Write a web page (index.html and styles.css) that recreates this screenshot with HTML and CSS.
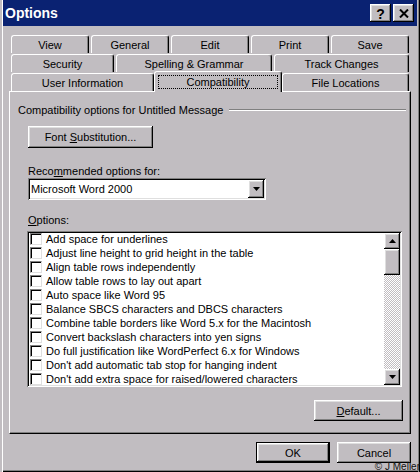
FILE: index.html
```html
<!DOCTYPE html>
<html>
<head>
<meta charset="utf-8">
<title>Options</title>
<link rel="stylesheet" href="styles.css">
</head>
<body>
<div class="window">
  <div class="titlebar">
    <span class="title">Options</span>
    <div class="caption-buttons">
      <div class="cap-btn help">?</div>
      <div class="cap-btn close">
        <svg width="10" height="9" viewBox="0 0 10 9"><path d="M1 0.5 L9 8.5 M9 0.5 L1 8.5" stroke="#000" stroke-width="2"/></svg>
      </div>
    </div>
  </div>
  <div class="body">
    <div class="tabs">
      <div class="tab-row row1">
        <div class="tab">View</div>
        <div class="tab">General</div>
        <div class="tab">Edit</div>
        <div class="tab">Print</div>
        <div class="tab">Save</div>
      </div>
      <div class="tab-row row2">
        <div class="tab">Security</div>
        <div class="tab">Spelling &amp; Grammar</div>
        <div class="tab">Track Changes</div>
      </div>
      <div class="tab-row row3">
        <div class="tab">User Information</div>
        <div class="tab active"><span class="focus">Compatibility</span></div>
        <div class="tab">File Locations</div>
      </div>
    </div>
    <div class="panel">
      <div class="group-head"><span>Compatibility options for Untitled Message</span><span class="etch"></span></div>
      <div class="group-body">
        <div class="btn font-sub"><span>Font <u>S</u>ubstitution...</span></div>
        <div class="label rec">Reco<u>m</u>mended options for:</div>
        <div class="combo">
          <span class="combo-text">Microsoft Word 2000</span>
          <span class="btn combo-btn"><svg width="7" height="4" viewBox="0 0 7 4"><polygon points="0,0 7,0 3.5,4" fill="#000"/></svg></span>
        </div>
        <div class="label opts"><u>O</u>ptions:</div>
        <div class="listbox">
          <ul class="items">
            <li class="item"><span class="cb"></span><span>Add space for underlines</span></li>
            <li class="item"><span class="cb"></span><span>Adjust line height to grid height in the table</span></li>
            <li class="item"><span class="cb"></span><span>Align table rows independently</span></li>
            <li class="item"><span class="cb"></span><span>Allow table rows to lay out apart</span></li>
            <li class="item"><span class="cb"></span><span>Auto space like Word 95</span></li>
            <li class="item"><span class="cb"></span><span>Balance SBCS characters and DBCS characters</span></li>
            <li class="item"><span class="cb"></span><span>Combine table borders like Word 5.x for the Macintosh</span></li>
            <li class="item"><span class="cb"></span><span>Convert backslash characters into yen signs</span></li>
            <li class="item"><span class="cb"></span><span>Do full justification like WordPerfect 6.x for Windows</span></li>
            <li class="item"><span class="cb"></span><span>Don't add automatic tab stop for hanging indent</span></li>
            <li class="item"><span class="cb"></span><span>Don't add extra space for raised/lowered characters</span></li>
          </ul>
          <div class="scrollbar">
            <div class="btn sb-btn"><svg width="7" height="4" viewBox="0 0 7 4"><polygon points="3.5,0 7,4 0,4" fill="#000"/></svg></div>
            <div class="btn sb-thumb"></div>
            <div class="sb-track"></div>
            <div class="btn sb-btn"><svg width="7" height="4" viewBox="0 0 7 4"><polygon points="0,0 7,0 3.5,4" fill="#000"/></svg></div>
          </div>
        </div>
        <div class="default-row"><div class="btn default-btn"><span><u>D</u>efault...</span></div></div>
      </div>
    </div>
    <div class="dialog-buttons">
      <div class="btn dlg-btn ok">OK</div>
      <div class="btn dlg-btn">Cancel</div>
    </div>
  </div>
  <div class="watermark">© J Meller</div>
</div>
</body>
</html>
```

FILE: styles.css
```css
* { box-sizing: border-box; }

body {
  margin: 0;
  background: #c1bdc1;
  font-family: "Liberation Sans", Arial, sans-serif;
  font-size: 11px;
  color: #000;
}

.window {
  position: relative;
  width: 420px;
  height: 472px;
  overflow: hidden;
  background: #c1bdc1;
  padding: 0 3px;
  box-shadow:
    inset 2px 0 #c1bdc1,
    inset 3px 0 #fff,
    inset -1px 0 #000,
    inset -2px 0 #808080,
    inset 0 -1px #000,
    inset 0 -2px #808080;
}

.titlebar {
  height: 26px;
  background: #0a2272;
  display: flex;
  align-items: center;
  justify-content: space-between;
  padding: 0 3px 0 2px;
}

.title {
  color: #fff;
  font-weight: bold;
  font-size: 14px;
}

.caption-buttons {
  display: flex;
  gap: 2px;
}

.cap-btn {
  width: 21px;
  height: 18px;
  background: #c1bdc1;
  display: flex;
  align-items: center;
  justify-content: center;
  box-shadow:
    inset -1px -1px #000,
    inset 1px 1px #fff,
    inset -2px -2px #808080,
    inset 2px 2px #dfdfdf;
}

.help {
  font-weight: bold;
  font-size: 14px;
  line-height: 1;
  padding-top: 1px;
}

.body {
  padding: 9px 6px 0;
}

.tabs {
  display: flex;
  flex-direction: column;
  gap: 1px;
  padding: 0 2px;
}

.tab-row {
  display: grid;
  gap: 2px;
  height: 18px;
}

.row1 { grid-template-columns: repeat(5, 1fr); }
.row2 { grid-template-columns: 103px 156px 1fr; }
.row3 { grid-template-columns: 143px 124px 1fr; }

.tab {
  background: #c1bdc1;
  border-top: 1px solid #fff;
  border-left: 1px solid #fff;
  border-right: 1px solid #000;
  border-radius: 3px 3px 0 0;
  box-shadow: inset -1px 0 #808080;
  display: flex;
  align-items: center;
  justify-content: center;
  white-space: nowrap;
}

.tab.active {
  position: relative;
  z-index: 1;
  margin: -2px -2px -1px;
  padding: 3px;
  align-items: stretch;
}

.focus {
  flex: 1;
  border: 1px dotted #000;
  display: flex;
  align-items: center;
  justify-content: center;
}

.panel {
  height: 343px;
  border-top: 1px solid #fff;
  border-left: 1px solid #fff;
  border-right: 1px solid #000;
  border-bottom: 1px solid #000;
  box-shadow: inset -1px -1px #808080;
  padding: 11px 7px 0 8px;
}

.group-head {
  display: flex;
  align-items: center;
  height: 14px;
  margin-right: -3px;
  white-space: nowrap;
}

.etch {
  flex: 1;
  height: 2px;
  margin-left: 6px;
  border-top: 1px solid #808080;
  border-bottom: 1px solid #fff;
}

.group-body {
  padding-left: 10px;
}

.btn {
  background: #c1bdc1;
  display: flex;
  align-items: center;
  justify-content: center;
  white-space: nowrap;
  box-shadow:
    inset -1px -1px #000,
    inset 1px 1px #fff,
    inset -2px -2px #808080,
    inset 2px 2px #dfdfdf;
}

.font-sub {
  margin-top: 9px;
  width: 125px;
  height: 22px;
}

.label {
  line-height: 14px;
  height: 14px;
}

.rec { margin-top: 16px; }

.combo {
  width: 238px;
  height: 22px;
  background: #fff;
  padding: 2px;
  display: flex;
  align-items: stretch;
  box-shadow:
    inset 1px 1px #808080,
    inset -1px -1px #fff,
    inset 2px 2px #000,
    inset -2px -2px #dfdfdf;
}

.combo-text {
  flex: 1;
  padding-left: 1px;
  display: flex;
  align-items: center;
}

.combo-btn {
  width: 16px;
}

.opts { margin-top: 13px; }

.listbox {
  margin-top: 4px;
  margin-left: -1px;
  width: 375px;
  height: 156px;
  background: #fff;
  padding: 2px;
  display: flex;
  overflow: hidden;
  box-shadow:
    inset 1px 1px #808080,
    inset -1px -1px #fff,
    inset 2px 2px #000,
    inset -2px -2px #dfdfdf;
}

.items {
  flex: 1;
  list-style: none;
  margin: -1px 0 0;
  padding: 0;
  overflow: hidden;
}

.item {
  height: 14px;
  display: flex;
  align-items: center;
  gap: 4px;
  padding-left: 1px;
  white-space: nowrap;
}

.cb {
  width: 12px;
  height: 12px;
  flex: none;
  border-top: 1px solid #808080;
  border-left: 1px solid #808080;
  border-right: 1px solid #dfdfdf;
  border-bottom: 1px solid #dfdfdf;
  box-shadow: inset 1px 1px #000;
}

.scrollbar {
  width: 16px;
  display: flex;
  flex-direction: column;
}

.sb-btn {
  height: 16px;
  flex: none;
}

.sb-thumb {
  height: 26px;
  flex: none;
}

.sb-track {
  flex: 1;
  background: repeating-conic-gradient(#fff 0 25%, #c1bdc1 0 50%) 0 0 / 2px 2px;
}

.default-row {
  margin-top: 13px;
  display: flex;
  justify-content: flex-end;
}

.default-btn {
  width: 89px;
  height: 21px;
}

.dialog-buttons {
  margin-top: 8px;
  display: flex;
  justify-content: flex-end;
  gap: 7px;
}

.dlg-btn {
  width: 74px;
  height: 21px;
}

.ok {
  border: 1px solid #000;
}

.watermark {
  position: absolute;
  right: 0;
  bottom: 0;
  font-size: 10px;
  line-height: 10px;
  color: #111;
}
```
